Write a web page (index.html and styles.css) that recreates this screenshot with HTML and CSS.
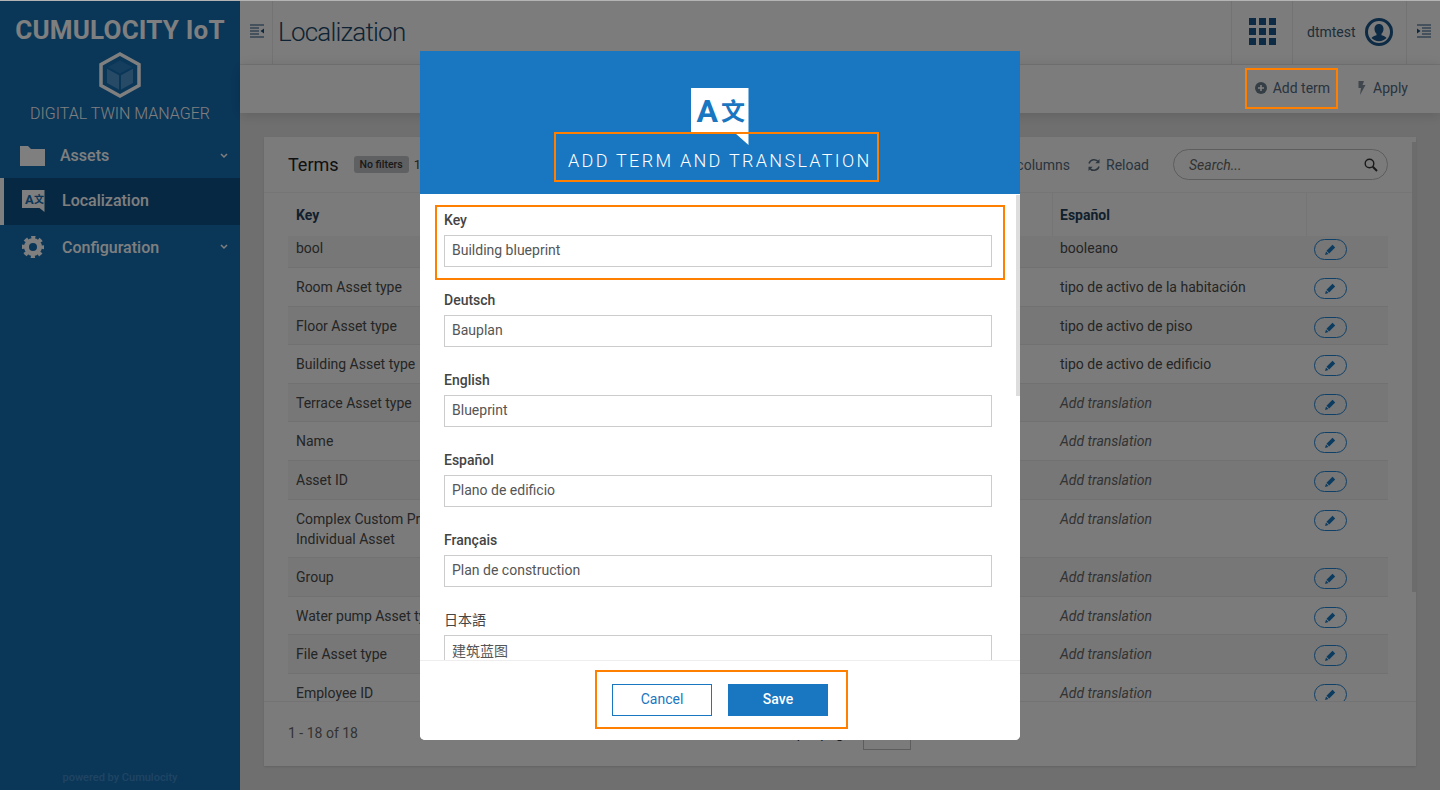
FILE: index.html
```html
<!DOCTYPE html>
<html lang="en">
<head>
    <meta charset="UTF-8">
    <meta name="viewport" content="width=device-width, initial-scale=1.0">
    <title>Localization</title>
    <link rel="stylesheet" href="styles.css">
</head>
<body>
    <aside class="sidebar">
        <div class="brand">CUMULOCITY IoT</div>
        <svg class="logo" width="44" height="46" viewBox="0 0 44 46">
            <polygon points="22,2 41,12.500 41,33.500 22,44 3,33.500 3,12.500" fill="none" stroke="#fff" stroke-width="3.500"/>
            <polygon points="22,8.500 34,15 22,21.500 10,15" fill="#2a7cbd"/>
            <polygon points="9,16.700 21,23.200 21,37.500 9,31" fill="#4f94cc"/>
            <polygon points="35,16.700 23,23.200 23,37.500 35,31" fill="#4f94cc"/>
        </svg>
        <div class="app-name">DIGITAL TWIN MANAGER</div>
        <nav class="side-nav">
            <a class="side-item item-assets">
                <svg class="folder-icon" width="25" height="20" viewBox="0 0 25 20"><path d="M0 0h8l3 3h14v17H0z" fill="#fff"/></svg>
                <span>Assets</span>
                <svg class="chevron" width="8" height="6" viewBox="0 0 8 6"><path d="M1 1l3 3 3-3" fill="none" stroke="#fff" stroke-width="1.500"/></svg>
            </a>
            <a class="side-item item-active">
                <svg width="23" height="22" viewBox="0 0 23 22">
                    <path d="M0 0h22.500v22l-5-4H0z" fill="#fff"/>
                    <text x="3" y="13.500" class="side-glyph">A</text>
                    <text x="12" y="13" class="side-glyph-cjk">文</text>
                </svg>
                <span>Localization</span>
            </a>
            <a class="side-item item-config">
                <svg width="22" height="22" viewBox="0 0 22 22">
                    <circle cx="11" cy="11" r="6.500" fill="none" stroke="#fff" stroke-width="5"/>
                    <circle cx="11" cy="11" r="9.500" fill="none" stroke="#fff" stroke-width="3.500" stroke-dasharray="4 3.460" stroke-dashoffset="2"/>
                </svg>
                <span>Configuration</span>
                <svg class="chevron" width="8" height="6" viewBox="0 0 8 6"><path d="M1 1l3 3 3-3" fill="none" stroke="#fff" stroke-width="1.500"/></svg>
            </a>
        </nav>
        <div class="powered">powered by Cumulocity</div>
    </aside>

    <div class="page">
        <header class="topbar">
            <div class="bar-toggle">
                <svg width="14" height="14" viewBox="0 0 14 14"><path d="M0 1h14M0 4h9M0 7h9M0 10h9M0 13h14" stroke="#1c4f7a" stroke-width="1.200"/><path d="M14 4.500v5l-3.500-2.500z" fill="#1c4f7a"/></svg>
            </div>
            <h1>Localization</h1>
            <div class="top-right">
                <div class="top-cell apps">
                    <i></i><i></i><i></i><i></i><i></i><i></i><i></i><i></i><i></i>
                </div>
                <div class="top-cell user">
                    <span>dtmtest</span>
                    <svg width="28" height="28" viewBox="0 0 28 28">
                        <circle cx="14" cy="14" r="12.500" fill="none" stroke="#1a5688" stroke-width="3"/>
                        <path d="M14 6c3 0 4.500 2.300 4.500 5 0 2-1 3.800-2 4.800v1.400c2.500.7 4.500 1.600 5 2.800-1.800 2-4.500 3.200-7.500 3.200s-5.700-1.200-7.500-3.200c.5-1.200 2.500-2.100 5-2.800v-1.400c-1-1-2-2.800-2-4.800 0-2.700 1.500-5 4.500-5z" fill="#1a5688"/>
                    </svg>
                </div>
                <div class="top-cell right-toggle">
                    <svg width="14" height="14" viewBox="0 0 14 14"><path d="M0 1h14M5 4h9M5 7h9M5 10h9M0 13h14" stroke="#1c4f7a" stroke-width="1.200"/><path d="M0 4.500v5l3.500-2.500z" fill="#1c4f7a"/></svg>
                </div>
            </div>
        </header>
        <div class="actionbar">
            <a class="action action-add">
                <svg width="12" height="12" viewBox="0 0 12 12"><circle cx="6" cy="6" r="6" fill="#6c7c8b"/><path d="M6 3v6M3 6h6" stroke="#fff" stroke-width="1.600"/></svg>
                Add term
            </a>
            <a class="action action-apply">
                <svg width="9" height="14" viewBox="0 0 9 14"><path d="M1.500 0h5.500L5.500 4H8.500L3 14l1-7H1.500z" fill="#7f8d9a"/></svg>
                Apply
            </a>
        </div>

        <main class="content">
            <section class="card">
                <div class="card-head">
                    <h2>Terms</h2>
                    <span class="badge">No filters</span>
                    <span class="count">18 items</span>
                    <div class="card-tools">
                        <a class="tool">Configure columns</a>
                        <a class="tool">
                            <svg width="14" height="14" viewBox="0 0 14 14"><path d="M2 5.500A5.300 5.300 0 0 1 11.500 4M12 8.500A5.300 5.300 0 0 1 2.500 10" fill="none" stroke="#5d6f80" stroke-width="1.500"/><path d="M12.500 1v4.200H8.300zM1.500 13V8.800h4.200z" fill="#5d6f80"/></svg>
                            Reload
                        </a>
                        <div class="search">
                            <span>Search...</span>
                            <svg width="14" height="14" viewBox="0 0 14 14"><circle cx="5.500" cy="5.500" r="4.300" fill="none" stroke="#333" stroke-width="1.400"/><path d="M8.800 8.800L13 13" stroke="#333" stroke-width="2"/></svg>
                        </div>
                    </div>
                </div>
                <div class="table-head">
                    <div class="col-key">Key</div>
                    <div class="col-es">Español</div>
                    <div class="col-act"></div>
                </div>
                <div class="table-body" id="rows"></div>
                <div class="card-foot">
                    <span>1 - 18 of 18</span>
                    <div class="pager">
                        <span>Items per page</span>
                        <div class="page-size"></div>
                    </div>
                </div>
                <div class="card-scroll"></div>
            </section>
        </main>
    </div>

    <div class="backdrop">
        <div class="modal">
            <div class="modal-head">
                <svg class="bubble" width="58" height="57" viewBox="0 0 58 57">
                    <path d="M0 0h57.500v57L44 45H0z" fill="#fff"/>
                    <text x="5.500" y="34" class="bubble-a">A</text>
                    <text x="30" y="31.500" class="bubble-b">文</text>
                </svg>
                <div class="modal-title">ADD TERM AND TRANSLATION</div>
            </div>
            <div class="modal-body">
                <div class="field"><label>Key</label><input type="text" value="Building blueprint"></div>
                <div class="field"><label>Deutsch</label><input type="text" value="Bauplan"></div>
                <div class="field"><label>English</label><input type="text" value="Blueprint"></div>
                <div class="field"><label>Español</label><input type="text" value="Plano de edificio"></div>
                <div class="field"><label>Français</label><input type="text" value="Plan de construction"></div>
                <div class="field"><label class="label-cjk">日本語</label><input type="text" value="建筑蓝图"></div>
                <div class="modal-scroll"></div>
            </div>
            <div class="modal-foot">
                <button class="btn btn-cancel">Cancel</button>
                <button class="btn btn-save">Save</button>
            </div>
        </div>
    </div>

    <!-- orange callouts drawn over the screenshot -->
    <div class="top-line"></div>
    <div class="callout call-add"></div>
    <div class="callout call-title"></div>
    <div class="callout call-key"></div>
    <div class="callout call-save"></div>

    <script>
        // Table rows, es = null means no translation yet
        const terms = [
            { key: "bool", es: "booleano" },
            { key: "Room Asset type", es: "tipo de activo de la habitación" },
            { key: "Floor Asset type", es: "tipo de activo de piso" },
            { key: "Building Asset type", es: "tipo de activo de edificio" },
            { key: "Terrace Asset type", es: null },
            { key: "Name", es: null },
            { key: "Asset ID", es: null },
            { key: "Complex Custom Property of<br>Individual Asset", es: null },
            { key: "Group", es: null },
            { key: "Water pump Asset type", es: null },
            { key: "File Asset type", es: null },
            { key: "Employee ID", es: null }
        ];

        const pencil = `<svg width="11" height="11" viewBox="0 0 11 11"><path d="M7.500.8l2.700 2.700-6 6L1.500 6.800z" fill="#1976c1"/><path d="M1 7.500l2.500 2.500L0 11z" fill="#1976c1"/></svg>`;
        const rows = document.getElementById('rows');
        terms.forEach(term => {
            const row = document.createElement('div');
            row.className = 'row';
            const es = term.es ? term.es : '<em>Add translation</em>';
            row.innerHTML = `
                <div class="col-key">${term.key}</div>
                <div class="col-es">${es}</div>
                <div class="col-act"><a class="pill">${pencil}</a></div>
            `;
            rows.appendChild(row);
        });
    </script>
</body>
</html>
```
FILE: styles.css
```css
* {
    box-sizing: border-box;
}
html, body {
    height: 100%;
}
body {
    margin: 0;
    display: flex;
    overflow: hidden;
    font-family: Roboto, "Noto Sans CJK SC", sans-serif;
    font-size: 14px;
    color: #444;
    background-color: #dfdfdf;
}
a {
    color: inherit;
    text-decoration: none;
}

/* Sidebar */
.sidebar {
    width: 240px;
    flex: none;
    position: relative;
    display: flex;
    flex-direction: column;
    align-items: center;
    background: #156db1;
    color: #fff;
}
.brand {
    margin-top: 15px;
    font-size: 26px;
    line-height: 30px;
    font-weight: 700;
    letter-spacing: .2px;
}
.logo {
    margin-top: 7px;
}
.app-name {
    margin-top: 6px;
    font-size: 16px;
    line-height: 20px;
    font-weight: 300;
}
.side-nav {
    width: 100%;
    margin-top: 9px;
    align-self: stretch;
}
.side-item {
    display: flex;
    align-items: center;
    gap: 18px;
    height: 46px;
    padding: 0 12px 0 22px;
    font-size: 16px;
    font-weight: 500;
}
.item-assets {
    height: 45px;
    padding-left: 20px;
    gap: 15px;
}
.item-active {
    height: 47px;
    background: #0f5187;
    border-left: 4px solid #fff;
    padding: 0 12px 2px 18px;
    gap: 17px;
}
.item-config {
    padding-bottom: 2px;
}
.chevron {
    margin-left: auto;
}
.side-glyph {
    font: 700 13px Roboto, sans-serif;
    fill: #156db1;
}
.side-glyph-cjk {
    font: 700 10px "Noto Sans CJK SC", sans-serif;
    fill: #156db1;
}
.powered {
    margin-top: auto;
    margin-bottom: 5px;
    font-size: 11px;
    line-height: 14px;
    font-weight: 500;
    color: #3f8ac6;
}

/* Header bars */
.page {
    flex: 1;
    min-width: 0;
    display: flex;
    flex-direction: column;
}
.topbar {
    height: 65px;
    flex: none;
    display: flex;
    align-items: stretch;
    background: #f8f8f8;
    border-bottom: 1px solid #e6e6e6;
}
.bar-toggle {
    width: 33px;
    padding: 0 0 2px 10px;
    display: flex;
    align-items: center;
    border-right: 1px solid #e6e6e6;
}
.topbar h1 {
    margin: 0 0 0 5px;
    font-size: 26px;
    line-height: 65px;
    font-weight: 300;
    letter-spacing: -.8px;
    color: #1c4667;
}
.top-right {
    margin-left: auto;
    display: flex;
}
.top-cell {
    display: flex;
    align-items: center;
    border-left: 1px solid #e6e6e6;
}
.apps {
    width: 61px;
    padding: 18px 16px 19px 17px;
    display: grid;
    align-items: stretch;
    grid-template-columns: repeat(3, 7px);
    grid-auto-rows: 7px;
    gap: 3px;
}
.apps i {
    display: block;
    background: #1a5688;
}
.user {
    width: 114px;
    padding-left: 14px;
    gap: 9px;
    color: #3d5b75;
}
.right-toggle {
    width: 34px;
    padding: 0 0 2px 10px;
}
.actionbar {
    height: 48px;
    flex: none;
    display: flex;
    justify-content: flex-end;
    align-items: center;
    padding: 0 32px 2px 0;
    background: #f8f8f8;
    position: relative;
    box-shadow: 0 2px 12px rgba(0, 0, 0, .14);
}
.action {
    display: flex;
    align-items: center;
    gap: 6px;
    color: #52697e;
}
.action-add {
    margin-right: 27px;
}
.action-apply {
    gap: 7px;
}

/* Terms card */
.content {
    flex: 1;
    min-height: 0;
    padding: 24px 24px 24px 24px;
}
.card {
    position: relative;
    height: 629px;
    display: flex;
    flex-direction: column;
    background: #f7f7f7;
    box-shadow: 0 1px 2px rgba(0, 0, 0, .12);
}
.card-head {
    height: 56px;
    flex: none;
    display: flex;
    align-items: center;
    padding: 0 28px 0 24px;
    border-bottom: 1px solid #ebebeb;
}
.card-head h2 {
    margin: 0;
    font-size: 18px;
    font-weight: 400;
    color: #222;
}
.badge {
    margin-left: 15px;
    padding: 0 6px;
    height: 17px;
    line-height: 17px;
    font-size: 10.500px;
    font-weight: 500;
    border-radius: 3px;
    color: #333;
    background: #bcc0c4;
}
.count {
    margin-left: 5px;
    font-size: 13px;
}
.card-tools {
    margin-left: auto;
    display: flex;
    align-items: center;
    gap: 17px;
    color: #52697e;
}
.tool {
    display: flex;
    align-items: center;
    gap: 5px;
}
.search {
    width: 215px;
    height: 31px;
    margin-left: 7px;
    display: flex;
    align-items: center;
    justify-content: space-between;
    padding: 0 9px 0 15px;
    border: 1px solid #bbb;
    border-radius: 16px;
    font-style: italic;
    color: #666;
}
.table-head, .row {
    display: flex;
    margin: 0 28px 0 24px;
}
.table-head {
    height: 43px;
    flex: none;
    align-items: center;
    font-weight: 700;
    color: #243f5a;
}
.table-head .col-key {
    height: 100%;
    line-height: 45px;
}
.table-head .col-es {
    height: 100%;
    line-height: 45px;
    padding-left: 7px;
    border-left: 1px solid #ebebeb;
    border-right: 1px solid #ebebeb;
}
.col-key {
    width: 764px;
    padding-left: 8px;
}
.col-es {
    width: 255px;
    padding-left: 8px;
}
.col-act {
    flex: 1;
    padding-left: 7px;
}
.table-body {
    height: 466px;
    overflow: hidden;
    border-bottom: 1px solid #e6e6e6;
    flex: none;
}
.row {
    padding: 9px 0 8.600px;
    line-height: 20px;
    color: #4a4a4a;
    border-bottom: 1px solid #e2e2e2;
}
.row:first-child {
    margin-top: -6.600px;
}
.row:nth-child(odd) {
    background: #eeeeee;
}
.row em {
    color: #666;
}
.pill {
    display: flex;
    align-items: center;
    justify-content: center;
    width: 33px;
    height: 21px;
    margin: 1px 0 -2px;
    border: 1px solid #1f80d0;
    border-radius: 11px;
}
.card-foot {
    flex: 1;
    display: flex;
    align-items: center;
    padding: 0 28px 2px 24px;
    color: #666;
    position: relative;
}
.pager {
    position: absolute;
    left: 494px;
    top: 14px;
    display: flex;
    align-items: center;
    gap: 12px;
    color: #333;
}
.page-size {
    width: 48px;
    height: 34px;
    border: 1px solid #bbb;
}
.card-scroll {
    position: absolute;
    right: 0;
    top: 5px;
    width: 4px;
    height: 450px;
    background: #d8d8d8;
}

/* Modal */
.backdrop {
    position: fixed;
    top: 0;
    left: 0;
    right: 0;
    bottom: 0;
    display: flex;
    justify-content: center;
    align-items: flex-start;
    padding-top: 51px;
    background: rgba(0, 0, 0, .5);
}
.modal {
    width: 600px;
    height: 689px;
    display: flex;
    flex-direction: column;
    background: #fff;
    border-radius: 0 0 5px 5px;
    overflow: hidden;
}
.modal-head {
    height: 143px;
    flex: none;
    display: flex;
    flex-direction: column;
    align-items: center;
    padding-top: 37px;
    background: #1976c1;
    position: relative;
}
.bubble {
    display: block;
}
.bubble-a {
    font: 700 32px Roboto, sans-serif;
    fill: #1976c1;
}
.bubble-b {
    font: 700 24px "Noto Sans CJK SC", sans-serif;
    fill: #1976c1;
}
.modal-title {
    position: absolute;
    top: 98px;
    left: 148px;
    font-size: 18px;
    font-weight: 300;
    line-height: 24px;
    letter-spacing: 2.300px;
    color: #fff;
    white-space: nowrap;
}
.modal-body {
    flex: 1;
    min-height: 0;
    overflow: hidden;
    position: relative;
    padding: 16px 28px 0 24px;
}
.modal-scroll {
    position: absolute;
    right: 0;
    top: 1px;
    width: 4px;
    height: 201px;
    background: #ddd;
}
.field {
    height: 80px;
}
.field label {
    display: block;
    font-size: 14px;
    line-height: 20px;
    font-weight: 500;
    color: #444;
    margin-bottom: 5px;
}
.field .label-cjk {
    font-weight: 400;
}
.field input {
    display: block;
    width: 100%;
    height: 32px;
    padding: 0 7px 2px;
    border: 1px solid #ccc;
    border-radius: 0;
    font: 14px Roboto, "Noto Sans CJK SC", sans-serif;
    color: #555;
    background: #fff;
}
.modal-foot {
    height: 80px;
    flex: none;
    display: flex;
    justify-content: center;
    align-items: center;
    gap: 16px;
    padding-bottom: 2px;
    border-top: 1px solid #eee;
    background: #fff;
}
.btn {
    width: 100px;
    height: 32px;
    padding: 0 0 2px;
    border: 1px solid #1976c1;
    border-radius: 0;
    font: 14px Roboto, sans-serif;
    cursor: pointer;
}
.btn-cancel {
    background: #fff;
    color: #1976c1;
}
.btn-save {
    background: #1976c1;
    color: #fff;
    font-weight: 500;
}

/* Orange callouts */
.top-line {
    position: fixed;
    top: 0;
    left: 0;
    right: 0;
    height: 1px;
    background: #b4b4b4;
}
.callout {
    position: fixed;
    border: 2px solid #ff8000;
}
.call-add {
    left: 1245px;
    top: 68px;
    width: 93px;
    height: 41px;
}
.call-title {
    left: 554px;
    top: 132px;
    width: 325px;
    height: 50px;
}
.call-key {
    left: 435px;
    top: 205px;
    width: 570px;
    height: 75px;
}
.call-save {
    left: 595px;
    top: 670px;
    width: 253px;
    height: 59px;
}
```
